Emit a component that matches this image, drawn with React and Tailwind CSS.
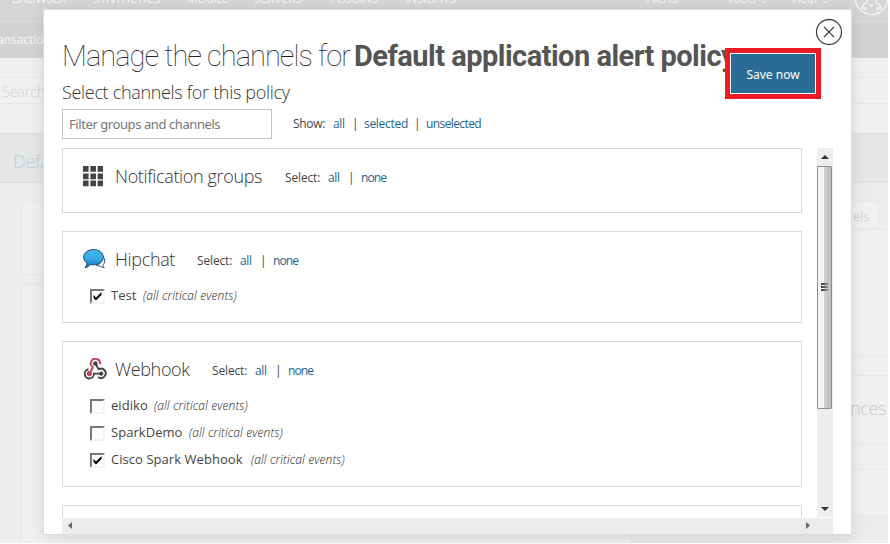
import React from "react";

const link = "text-[#1d6391]";

function SelectLinks() {
  return (
    <div className="flex h-4 items-center whitespace-nowrap text-[12px] leading-4 tracking-[-0.15px] text-[#444]">
      <span className="w-[43px]">Select:</span>
      <a className={`${link} w-[20px] tracking-[-0.3px]`}>all</a>
      <span className="w-[13px]">|</span>
      <a className={`${link} tracking-[-0.9px]`}>none</a>
    </div>
  );
}

function Group({ icon, title, width, height, children }) {
  return (
    <section className={`${height} shrink-0 border border-[#d8d8d8] pl-[20px] pt-[14px]`}>
      <div className="flex h-[26px] items-center">
        <div className="w-[32px]">{icon}</div>
        <h3 className={`${width} whitespace-nowrap text-[18px] font-light leading-[26px] tracking-[-0.35px] text-[#333]`}>{title}</h3>
        <div className="pt-[3px]"><SelectLinks /></div>
      </div>
      {children}
    </section>
  );
}

function Channel({ name, width, checked }) {
  return (
    <label className="flex h-[27px] items-center pl-[7px]">
      <span className="mt-[1px] h-[15px] w-[15px] border-b-2 border-l-2 border-r-2 border-t-2 border-b-[#f3f3f3] border-l-[#777] border-r-[#f3f3f3] border-t-[#777]">
        {checked && (
          <svg width="11" height="11" viewBox="0 0 11 11"><path d="M1.500 4v3l2.500 2.500L9.500 4V1L4 6.500Z" fill="#000" /></svg>
        )}
      </span>
      <span className={`${width} ml-[6px] whitespace-nowrap text-[13px] tracking-[0.05px] text-[#444]`}>{name}</span>
      <em className="whitespace-nowrap text-[12px] font-light tracking-[0.12px] text-[#222]">(all critical events)</em>
    </label>
  );
}

function GridIcon() {
  return (
    <svg width="20" height="21" viewBox="0 0 20 21" fill="#444">
      {[0, 7.4, 14.5].map((y) => [0, 7.4, 14.6].map((x) => <rect key={`${x}-${y}`} x={x} y={y} width="5.6" height="5.8" rx=".5" />))}
    </svg>
  );
}

function ChatIcon() {
  return (
    <svg width="23" height="20" viewBox="0 0 23 20">
      <defs><linearGradient id="chat" x2="0" y2="1"><stop stopColor="#43baf0" /><stop offset=".5" stopColor="#35aae7" /><stop offset="1" stopColor="#1c75bd" /></linearGradient></defs>
      <path d="M19.500 7q3 2.800 2.200 6-.5 2-2 3 .2 1.600 1.700 2.500-3 .2-4.800-1.500-1.500.2-3-.5Q19 14.500 19.500 7Z" fill="#f5faff" stroke="#244c78" strokeWidth=".9" />
      <path d="M10.500.6C16 .6 20.300 3.800 20.300 8.300S16 15.800 10.500 15.800q-1.700 0-3.200-.4-1.700 3-5.300 3.200Q4 17 4.100 14 .6 12 .6 8.300C.6 3.800 5 .6 10.500.6Z" fill="url(#chat)" stroke="#1b426b" strokeWidth="1" />
    </svg>
  );
}

function WebhookIcon() {
  return (
    <svg className="ml-px" width="23" height="22" viewBox="0 0 23 22" fill="none" strokeWidth="1.900">
      <path d="M5.500 15.500 9 9.300A4.600 4.600 0 1 1 15.900 6.300" stroke="#c4455c" />
      <path d="M11.500 5.500 14.600 11.200A4.700 4.700 0 1 1 14.100 19" stroke="#444" />
      <path d="M4.500 11.300A4.600 4.600 0 1 0 9.900 15.600H17.500" stroke="#444" />
      <circle cx="11.300" cy="5.600" r="2.300" fill="#444" />
      <circle cx="5.300" cy="15.600" r="1.700" fill="#c4455c" stroke="#c4455c" />
      <circle cx="17.200" cy="15.600" r="1.700" fill="#444" stroke="#444" strokeWidth="1" />
    </svg>
  );
}

function Chevron() {
  return (
    <svg className="ml-[6px] mt-[6px]" width="6" height="4" fill="none" stroke="#f5f5f5"><path d="m.5.500 2.500 2.500L5.500.500" /></svg>
  );
}

function Backdrop() {
  return (
    <div className="h-[543px] w-[888px] overflow-hidden bg-[#eee]">
      <div className="relative h-[21px] overflow-hidden bg-[#d5d5d5] text-[12px] leading-[14px] text-[#f5f5f5]">
        <div className="-mt-[8px] flex whitespace-nowrap">
          <span className="ml-[12px] w-[81px] tracking-[-0.35px]">BROWSER</span>
          <span className="w-[94px] tracking-[-0.1px]">SYNTHETICS</span>
          <span className="w-[67px] tracking-[-0.5px]">MOBILE</span>
          <span className="w-[76px] tracking-[-0.1px]">SERVERS</span>
          <span className="w-[75px] tracking-[-0.3px]">PLUGINS</span>
          <span className="w-[242px] tracking-[-0.3px]">INSIGHTS</span>
          <span className="w-[80px] tracking-[-0.3px]">Alerts</span>
          <span className="flex w-[65px] items-center tracking-[-0.3px]">Tools <Chevron /></span>
          <span className="flex items-center tracking-[-0.3px]">Help <Chevron /></span>
        </div>
        <svg className="absolute left-[854px] top-0" width="34" height="18" fill="none" stroke="#f5f5f5" strokeWidth="1.300">
          <circle cx="17.500" cy="-1.500" r="16" />
          <path d="M13 0v3q-4 1-5 5h4l-1 3M22 0v3q4 1 5 5h-4l1 3M15 4l2.500 2L20 4" />
        </svg>
      </div>
      <div className="h-[37px] border-t border-[#dadada] bg-[#d3d3d3] pt-[8px] text-[12px] leading-[20px] text-[#f5f5f5]">
        <span className="-ml-[8px]">ransactions</span>
      </div>
      <div className="h-[75px] bg-[#f0f0f0] pt-[19px]">
        <div className="h-[27px] border-y border-[#e7e7e7] pl-[2px] text-[14px] font-light leading-[27px] text-[#d0d0d0]">Search</div>
      </div>
      <div className="h-[50px] border-y border-[#e0e0e0] bg-[#e6e6e6] pl-[13px] text-[18px] font-light leading-[54px] tracking-[-0.3px] text-[#bcd0df]">Default</div>
      <div className="flex h-[360px] justify-between">
        <div className="w-[631px] pl-[21px] pt-[18px]">
          <div className="h-[74px] border border-[#e8e8e8] bg-[#f0f0f0]" />
          <div className="mt-[9px] h-[280px] border border-[#e8e8e8] bg-[#f0f0f0]" />
        </div>
        <div className="w-[257px] bg-[#ececec] pt-[18px]">
          <div className="flex h-[28px] bg-[#eee]">
            <div className="w-[248px] border border-[#e8e8e8] bg-[#f0f0f0] pl-[221px] text-[13px] leading-[28px] text-[#d3d3d3]">els</div>
            <div className="flex-1" />
          </div>
          <div className="border-t border-[#e8e8e8] bg-[#f0f0f0]">
            <div className="h-[126px]" />
            <div className="h-[19px] border-t border-[#e8e8e8]" />
            <div className="h-[68px] border-t border-[#e8e8e8] pl-[219px] pt-[19px] text-[18px] font-light leading-[26px] tracking-[-0.3px] text-[#c8c8c8]">nces</div>
            <div className="h-[26px] border-t border-[#e8e8e8]" />
            <div className="h-[46px] border-t border-[#e8e8e8]" />
            <div className="h-[40px] border-t border-[#e8e8e8] bg-[#ececec]" />
          </div>
        </div>
      </div>
    </div>
  );
}

function VerticalScrollbar() {
  return (
    <div className="flex h-[369px] w-[16px] flex-col items-start bg-[#eee]">
      <svg width="16" height="18"><path d="M4 11h8L8 7Z" fill="#333" /></svg>
      <div className="flex h-[243px] w-[15px] flex-col items-center justify-center gap-px rounded-[1px] border border-[#8d8d8d] bg-gradient-to-r from-[#f4f4f4] from-45% via-[#cfcfd2] via-50% to-[#bcbdc1] pb-[2px]">
        <div className="h-[2px] w-[7px] bg-gradient-to-r from-[#333] to-[#999]" />
        <div className="h-[2px] w-[7px] bg-gradient-to-r from-[#333] to-[#999]" />
        <div className="h-[2px] w-[7px] bg-gradient-to-r from-[#333] to-[#999]" />
      </div>
      <svg className="mt-auto" width="16" height="17"><path d="M4 7h8l-4 4Z" fill="#333" /></svg>
    </div>
  );
}

function HorizontalScrollbar() {
  return (
    <div className="mt-px flex h-[16px] w-[771px] justify-between bg-[#ececec]">
      <svg width="16" height="16"><path d="M10 4v7L6 7.500Z" fill="#666" /></svg>
      <svg className="mr-[18px]" width="16" height="16"><path d="M7 4v7l4-3.500Z" fill="#666" /></svg>
    </div>
  );
}

export default function App() {
  return (
    <div className="relative h-[544px] w-[890px] overflow-hidden bg-white font-['Open_Sans','Noto_Sans',sans-serif]">
      <Backdrop />
      <main className="absolute left-[43px] top-[9px] h-[526px] w-[809px] border border-[#dcdcdc] bg-white pl-[18px] shadow-[0_3px_15px_rgba(0,0,0,0.11)]">
        <h1 className="mt-[26px] flex h-[40px] whitespace-nowrap font-['Roboto',sans-serif] text-[29px] leading-[40px] text-[#222]">
          <span className="w-[292px] font-thin tracking-[-0.95px]">Manage the channels for</span>
          <b className="font-bold tracking-[-0.52px] text-[#555]">Default application alert policy</b>
        </h1>
        <h2 className="mt-[3px] h-[26px] whitespace-nowrap text-[18px] font-light leading-[26px] tracking-[-0.32px] text-[#333]">Select channels for this policy</h2>
        <div className="mt-[4px] flex h-[30px]">
          <input className="h-[30px] w-[210px] border border-[#c5c5c5] px-[6px] font-['Noto_Sans',sans-serif] text-[13px] tracking-[-0.42px] placeholder:text-[#767676]" placeholder="Filter groups and channels" />
          <div className="ml-[21px] flex items-center whitespace-nowrap text-[12px] tracking-[-0.3px] text-[#444]">
            <span className="w-[40px]">Show:</span>
            <a className={`${link} w-[19px]`}>all</a>
            <span className="w-[12px]">|</span>
            <a className={`${link} w-[50px]`}>selected</a>
            <span className="w-[12px]">|</span>
            <a className={`${link} tracking-[-0.6px]`}>unselected</a>
          </div>
        </div>
        <div className="mt-[9px] flex h-[369px] w-[771px] justify-between">
          <div className="flex w-[740px] flex-col gap-[18px] overflow-hidden">
            <Group title="Notification groups" width="w-[170px]" height="h-[65px]" icon={<GridIcon />} />
            <Group title="Hipchat" width="w-[82px]" height="h-[92px]" icon={<ChatIcon />}>
              <div className="mt-[10px]"><Channel name="Test" width="w-[32px]" checked /></div>
            </Group>
            <Group title="Webhook" width="w-[97px]" height="h-[146px]" icon={<WebhookIcon />}>
              <div className="mt-[10px]">
                <Channel name="eidiko" width="w-[43px]" />
                <Channel name="SparkDemo" width="w-[78px]" />
                <Channel name="Cisco Spark Webhook" width="w-[140px]" checked />
              </div>
            </Group>
            <div className="h-[40px] shrink-0 border border-[#d8d8d8]" />
          </div>
          <VerticalScrollbar />
        </div>
        <HorizontalScrollbar />
      </main>
      <button aria-label="Close" className="absolute left-[815px] top-[18px]">
        <svg width="28" height="28" fill="none" stroke="#444"><circle cx="14" cy="14" r="12.500" strokeWidth="1.300" /><path d="m9 9 10 10M19 9 9 19" strokeWidth="1.200" /></svg>
      </button>
      <div className="absolute left-[725px] top-[48px] h-[51px] w-[96px] border-[5px] border-[#ed1c24] bg-white p-px">
        <button className="h-[39px] w-[84px] bg-[#2a6c96] pt-[2px] font-['Noto_Sans',sans-serif] text-[12px] text-white">Save now</button>
      </div>
    </div>
  );
}
